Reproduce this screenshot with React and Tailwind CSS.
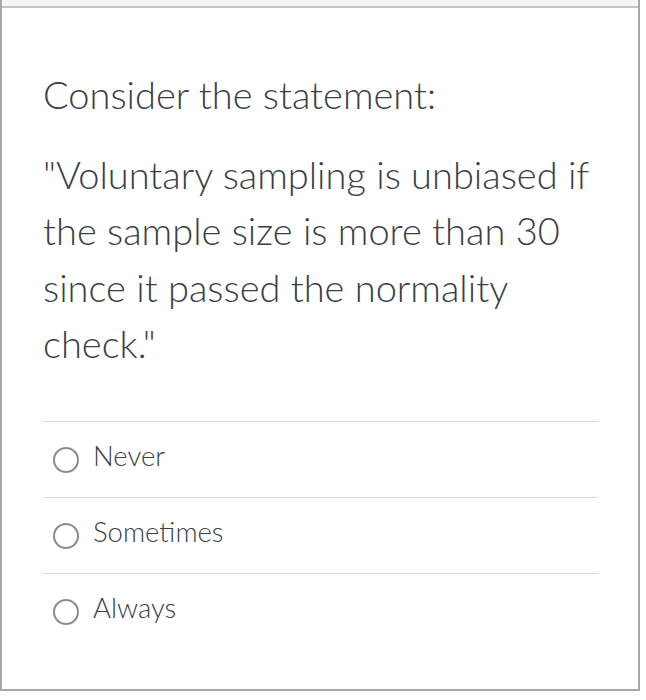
import React from "react";

function Radio() {
  return (
    <span className="inline-block w-[26px] h-[26px] rounded-full border-2 border-[#8a8a8a] bg-white shrink-0 relative top-[1px]" />
  );
}

function Option({ label }) {
  return (
    <div className="h-[76px] flex items-center gap-[14px] pl-[10px] border-t border-[#d9d9d9]">
      <Radio />
      <span className="text-[27.5px] leading-none text-[#3a3f44] font-light relative -top-[3px]">{label}</span>
    </div>
  );
}

export default function App() {
  return (
    <div className="bg-white min-h-[700px]" style={{ fontFamily: "Lato, 'Open Sans', sans-serif" }}>
      <div className="w-[640px] h-[691px] border-x-2 border-b-2 border-[#a8a8a8] bg-white flex flex-col">
        <div className="h-[8px] bg-[#f4f4f4] border-b-2 border-[#c4c4c4]" />
        <div className="pl-[41px] pr-[40px] pt-[64px] text-[#3a3f44] font-light">
          <h1 className="text-[38px] leading-[45.6px] font-light">Consider the statement:</h1>
          <p className="text-[38px] leading-[56.5px] mt-[28px]">
            "Voluntary sampling is unbiased if
            <br />
            the sample size is more than 30
            <br />
            since it passed the normality
            <br />
            check."
          </p>
          <div className="mt-[49px]">
            <Option label="Never" />
            <Option label="Sometimes" />
            <Option label="Always" />
          </div>
        </div>
      </div>
    </div>
  );
}
